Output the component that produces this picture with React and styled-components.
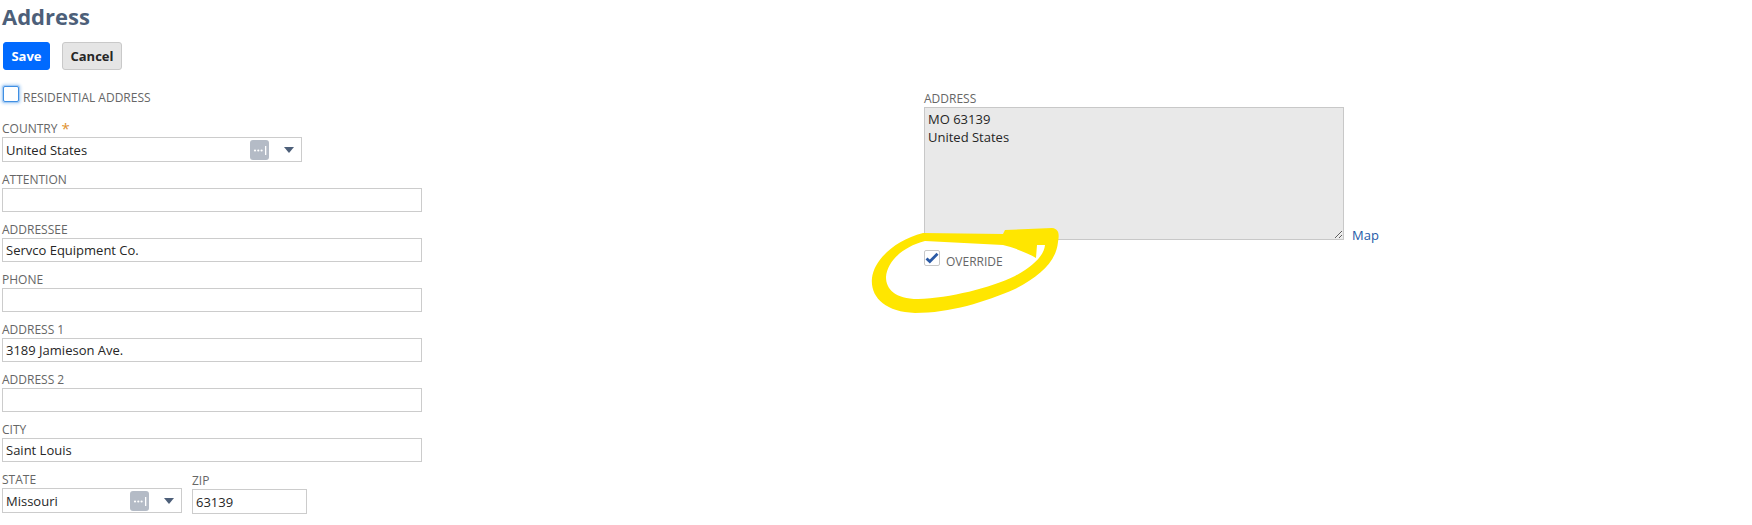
import styled, { createGlobalStyle } from "styled-components"

const GlobalStyle = createGlobalStyle`
  body {
    margin: 0;
    background: #ffffff;
    font-family: "Open Sans", "Liberation Sans", sans-serif;
  }
`

const Page = styled.div`
  position: relative;
  padding: 2px 0 0 2px;
`

const Title = styled.h1`
  margin: 0;
  font-size: 22px;
  line-height: 28px;
  font-weight: 700;
  color: #4d5f79;
`

const ButtonBar = styled.div`
  display: flex;
  gap: 12px;
  margin-top: 12px;
  padding-left: 1px;
`

const Button = styled.button`
  box-sizing: border-box;
  width: ${({ $primary }) => ($primary ? "47px" : "60px")};
  height: 28px;
  padding: 0;
  border-radius: 3px;
  border: 1px solid ${({ $primary }) => ($primary ? "#006aff" : "#c9c9c9")};
  background: ${({ $primary }) => ($primary ? "#006aff" : "#e5e5e5")};
  color: ${({ $primary }) => ($primary ? "#ffffff" : "#262626")};
  font-family: "Open Sans", sans-serif;
  font-size: 13px;
  font-weight: 700;
`

const Columns = styled.div`
  display: grid;
  grid-template-columns: 420px 420px;
  column-gap: 502px;
  margin-top: 13px;
`

const Column = styled.div`
  display: flex;
  flex-direction: column;
  align-items: flex-start;
`

const CheckRow = styled.div`
  display: flex;
  align-items: flex-end;
  margin-top: ${({ $top }) => $top || 0}px;
`

const CheckBox = styled.span`
  box-sizing: border-box;
  width: 16px;
  height: 16px;
  border-radius: 2px;
  background: #ffffff;
  display: flex;
  align-items: center;
  justify-content: center;
  border: 1px solid ${({ $focused }) => ($focused ? "#3f8fe3" : "#c8c8c8")};
  box-shadow: ${({ $focused }) =>
    $focused ? "0 0 0 1px #a9cdf4, 0 0 3px 2px #c3ddf8" : "none"};
  margin-left: ${({ $focused }) => ($focused ? "1px" : "0")};
`

const CheckLabel = styled.span`
  font-size: 12px;
  line-height: 14px;
  color: #666666;
  text-transform: uppercase;
  margin: 0 0 -3px ${({ $gap }) => $gap}px;
`

const Field = styled.div`
  display: flex;
  flex-direction: column;
  margin-top: ${({ $top }) => $top || 0}px;
  margin-bottom: 10px;
`

const Label = styled.label`
  font-size: 12px;
  line-height: 15px;
  color: #666666;
  text-transform: uppercase;
  margin-bottom: 1px;
  white-space: nowrap;
`

const Required = styled.span`
  color: #e0922f;
  font-size: 15px;
  line-height: 10px;
  margin-left: 4px;
  position: relative;
  top: 1px;
`

const Input = styled.div`
  box-sizing: border-box;
  width: ${({ $width }) => $width}px;
  height: ${({ $height }) => $height || 24}px;
  border: 1px solid #cccccc;
  background: #ffffff;
  padding: 0 3px;
  display: flex;
  align-items: center;
  font-size: 13px;
  color: #262626;
`

const SelectText = styled.span`
  flex: 1;
`

const DotsButton = styled.span`
  width: 19px;
  height: 20px;
  border-radius: 3px;
  background: #b4bbc6;
  display: flex;
  align-items: center;
  justify-content: center;
`

const Caret = styled.span`
  width: 0;
  height: 0;
  border-left: 5px solid transparent;
  border-right: 5px solid transparent;
  border-top: 6px solid #4d5f79;
  margin: 1px 4px 0 15px;
`

const Row = styled.div`
  display: flex;
  gap: 10px;
`

const AddressRow = styled.div`
  display: flex;
  align-items: flex-end;
`

const AddressBox = styled.textarea`
  box-sizing: border-box;
  width: 420px;
  height: 133px;
  margin: 0;
  border: 1px solid #c8c8c8;
  background: #e9e9e9;
  padding: 2px 3px;
  font-family: "Open Sans", sans-serif;
  font-size: 13px;
  line-height: 18px;
  color: #262626;
  outline: none;
  overflow: hidden;
`

const MapLink = styled.a`
  font-size: 13px;
  line-height: 18px;
  color: #255ba8;
  margin: 0 0 -4px 8px;
  text-decoration: none;
`

const Scribble = styled.svg`
  position: absolute;
  left: 0;
  top: 0;
  pointer-events: none;
`

function Dots() {
  return (
    <svg width="19" height="20" viewBox="0 0 19 20">
      <circle cx="5" cy="10.5" r="1.1" fill="#ffffff" />
      <circle cx="8.3" cy="10.5" r="1.1" fill="#ffffff" />
      <circle cx="11.6" cy="10.5" r="1.1" fill="#ffffff" />
      <rect x="15" y="6" width="1.3" height="9" fill="#ffffff" />
    </svg>
  )
}

function Select({ value, width }) {
  return (
    <Input $width={width} $height={25}>
      <SelectText>{value}</SelectText>
      <DotsButton>
        <Dots />
      </DotsButton>
      <Caret />
    </Input>
  )
}

function TextField({ label, value, width = 420, top }) {
  return (
    <Field $top={top}>
      <Label>{label}</Label>
      <Input $width={width}>{value}</Input>
    </Field>
  )
}

// hand-drawn highlighter loop around OVERRIDE
const loopOuter =
  "M 923 233 L 1003 234 L 1005 230 L 1052 228 C 1060 229, 1059 236, 1058 242 C 1056 262, 1040 276, 1015 289 C 985 302, 950 313, 915 313 C 885 312, 870 297, 872 278 C 874 260, 895 240, 923 233 Z"
const loopInner =
  "M 925 241 L 1003 245 C 1015 248, 1028 253, 1036 258 L 1037 245 L 1045 245 C 1044 255, 1035 265, 1015 276 C 990 288, 950 298, 918 299 C 895 299, 886 289, 886 277 C 887 262, 902 247, 925 241 Z"

export default function App() {
  return (
    <Page>
      <GlobalStyle />
      <Title>Address</Title>
      <ButtonBar>
        <Button $primary>Save</Button>
        <Button>Cancel</Button>
      </ButtonBar>
      <Columns>
        <Column>
          <CheckRow $top={3}>
            <CheckBox $focused />
            <CheckLabel $gap={4}>Residential Address</CheckLabel>
          </CheckRow>
          <Field $top={19}>
            <Label>
              Country<Required>*</Required>
            </Label>
            <Select value="United States" width={300} />
          </Field>
          <TextField label="Attention" />
          <TextField label="Addressee" value="Servco Equipment Co." />
          <TextField label="Phone" />
          <TextField label="Address 1" value="3189 Jamieson Ave." />
          <TextField label="Address 2" />
          <TextField label="City" value="Saint Louis" />
          <Row>
            <Field>
              <Label>State</Label>
              <Select value="Missouri" width={180} />
            </Field>
            <Field $top={1}>
              <Label>Zip</Label>
              <Input $width={115} $height={25}>63139</Input>
            </Field>
          </Row>
        </Column>
        <Column>
          <Field $top={8}>
            <Label>Address</Label>
            <AddressRow>
              <AddressBox readOnly value={"MO 63139\nUnited States"} />
              <MapLink href="#">Map</MapLink>
            </AddressRow>
          </Field>
          <CheckRow $top={0}>
            <CheckBox>
              <svg width="14" height="12" viewBox="0 0 14 12">
                <path d="M1.5 6.5 L4.8 9.6 L12.5 1.8" fill="none" stroke="#2b5aa5" strokeWidth="2.8" />
              </svg>
            </CheckBox>
            <CheckLabel $gap={6}>Override</CheckLabel>
          </CheckRow>
        </Column>
      </Columns>
      <Scribble width="1752" height="525" viewBox="0 0 1752 525">
        <path d={`${loopOuter} ${loopInner}`} fill="#ffe600" fillRule="evenodd" />
      </Scribble>
    </Page>
  )
}
